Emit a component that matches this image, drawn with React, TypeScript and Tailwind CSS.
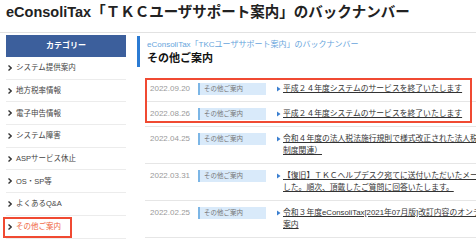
import React from "react";

const Chevron = () => (
  <svg width="4" height="6" viewBox="0 0 4 6" className="shrink-0">
    <path d="M0.5 0.5 L3.2 3 L0.5 5.5" fill="none" stroke="#333" strokeWidth="1.4" />
  </svg>
);

const Tri = () => (
  <svg width="4" height="6" viewBox="0 0 4 6" className="shrink-0 mt-[3px]">
    <path d="M0 0.5 L3.5 3 L0 5.5 Z" fill="#3b7fd0" />
  </svg>
);

const cats = [
  "システム提供案内",
  "地方税率情報",
  "電子申告情報",
  "システム障害",
  "ASPサービス休止",
  "OS・SP等",
  "よくあるQ&A",
  "その他ご案内",
];

type Row = { date: string; lines: string[] };

const rows: Row[] = [
  { date: "2022.09.20", lines: ["平成２４年度システムのサービスを終了いたします"] },
  { date: "2022.08.26", lines: ["平成２４年度システムのサービスを終了いたします"] },
  {
    date: "2022.04.25",
    lines: ["令和４年度の法人税法施行規則で様式改正された法人税申告書等への対応（グループ通算", "制度関連）"],
  },
  {
    date: "2022.03.31",
    lines: ["【復旧】ＴＫＣヘルプデスク宛てに送付いただいたメールが受信できない状況が解消しま", "した。順次、頂戴したご質問に回答いたします。"],
  },
  {
    date: "2022.02.25",
    lines: ["令和３年度eConsoliTax[2021年07月版]改訂内容のオンライン研修のご", "案内"],
  },
];

function RowItem({ r }: { r: Row }) {
  return (
    <div className="flex items-start py-[6px] border-b border-[#e6e6e6]">
      <div className="w-[53px] pl-[5px] shrink-0 text-[8px] leading-[12px] text-[#9a9a9a] font-['Liberation_Sans',sans-serif]">
        {r.date}
      </div>
      <div className="w-[68px] h-[12px] shrink-0 bg-[#d9eafa] border-l-2 border-[#7cb6e6] pl-[4px] text-[6.5px] leading-[12px] text-[#777]">
        その他ご案内
      </div>
      <div className="ml-[11px] flex items-start gap-[2px]">
        <Tri />
        <div className="text-[7.8px] leading-[12px] text-[#333] underline whitespace-nowrap">
          {r.lines.map((l, i) => (
            <div key={i}>{l}</div>
          ))}
        </div>
      </div>
    </div>
  );
}

export default function App() {
  return (
    <div className="w-[476px] h-[243px] overflow-hidden bg-white font-['Liberation_Sans','Noto_Sans_CJK_JP',sans-serif] text-[#333]">
      <div className="h-[33px] border-b border-[#e2e2e2] pl-[6px] pt-[3px]">
        <h1 className="text-[14.5px] leading-[18px] font-bold text-[#222] whitespace-nowrap">
          eConsoliTax「ＴＫＣユーザサポート案内」のバックナンバー
        </h1>
      </div>
      <div className="flex pl-[6px] pt-[2px]">
        <aside className="w-[120px] shrink-0">
          <div className="h-[22px] bg-[#3c5f9c] flex items-center justify-center text-white text-[8px] font-bold">
            カテゴリー
          </div>
          {cats.map((c, i) => {
            const active = i === cats.length - 1;
            return (
              <div
                key={c}
                className="relative h-[22.7px] border-b border-[#ececec] flex items-center gap-[4px] pl-[2px]"
              >
                <Chevron />
                <span className={"text-[7.5px] " + (active ? "text-[#f0643c]" : "text-[#444]")}>{c}</span>
                {active && (
                  <div className="absolute left-[-3px] top-[1px] w-[69px] h-[21px] border-2 border-[#f04a32]" />
                )}
              </div>
            );
          })}
        </aside>
        <main className="ml-[11px] w-[400px] shrink-0">
          <div className="mt-[1px] h-[31px] border-l-[3px] border-[#2b7bd3] pl-[7px] pt-[3px]">
            <div className="text-[8px] leading-[11px] text-[#67a5dc] whitespace-nowrap">
              eConsoliTax「TKCユーザサポート案内」のバックナンバー
            </div>
            <div className="text-[11px] leading-[14px] font-bold text-[#111] mt-[1px]">その他ご案内</div>
          </div>
          <div className="ml-[8px] mt-[10px] w-[420px]">
            <div className="relative">
              <RowItem r={rows[0]} />
              <RowItem r={rows[1]} />
              <div className="absolute left-0 top-[1px] w-[327px] h-[45px] border-2 border-[#f04a32]" />
            </div>
            {rows.slice(2).map((r) => (
              <RowItem key={r.date} r={r} />
            ))}
          </div>
        </main>
      </div>
    </div>
  );
}
